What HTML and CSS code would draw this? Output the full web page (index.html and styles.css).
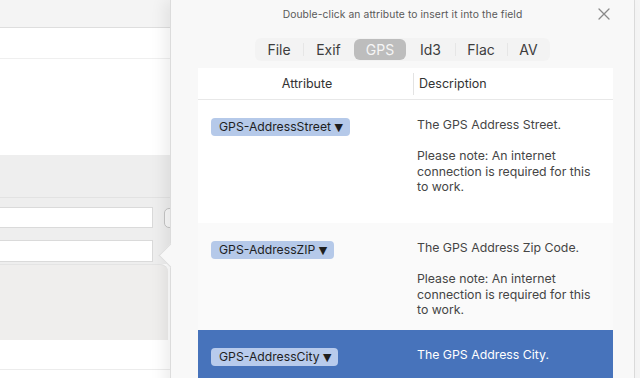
FILE: index.html
```html
<!DOCTYPE html>
<html>
<head>
<meta charset="utf-8">
<link rel="stylesheet" href="styles.css">
</head>
<body>
<div class="app">
  <div class="main">
    <div class="toolbar"></div>
    <div class="pathbar"></div>
    <div class="blank"></div>
    <div class="band"></div>
    <div class="fields">
      <div class="field-row"><div class="input"></div><div class="btn"></div></div>
      <div class="field-row second"><div class="input"></div></div>
    </div>
    <div class="sheet"></div>
    <div class="footer"></div>
  </div>
  <div class="side"></div>

  <div class="popover">
    <div class="pop-head">
      <span></span>
      <span class="hint">Double-click an attribute to insert it into the field</span>
      <span class="close" aria-label="Close">
        <svg width="12" height="12" viewBox="0 0 12 12"><path d="M1 1 L11 11 M11 1 L1 11" stroke="#8a8a8a" stroke-width="1.3" fill="none" stroke-linecap="round"/></svg>
      </span>
    </div>
    <div class="seg">
      <span class="tab">File</span>
      <span class="tab sep">Exif</span>
      <span class="tab active">GPS</span>
      <span class="tab">Id3</span>
      <span class="tab sep">Flac</span>
      <span class="tab sep">AV</span>
    </div>
    <div class="table">
      <div class="thead">
        <div class="th th-attr">Attribute</div>
        <div class="th th-desc">Description</div>
      </div>
      <div class="tr r1">
        <div class="td-attr"><span class="token">GPS-AddressStreet <span class="caret">▼</span></span></div>
        <div class="td-desc">The GPS Address Street.<br><br>Please note: An internet connection is required for this to work.</div>
      </div>
      <div class="tr r2">
        <div class="td-attr"><span class="token">GPS-AddressZIP <span class="caret">▼</span></span></div>
        <div class="td-desc">The GPS Address Zip Code.<br><br>Please note: An internet connection is required for this to work.</div>
      </div>
      <div class="tr r3 selected">
        <div class="td-attr"><span class="token">GPS-AddressCity <span class="caret">▼</span></span></div>
        <div class="td-desc">The GPS Address City.</div>
      </div>
    </div>
  </div>
</div>
</body>
</html>
```

FILE: styles.css
```css
* { box-sizing: border-box; }
html, body { margin: 0; padding: 0; }
body {
  width: 640px;
  height: 378px;
  overflow: hidden;
  font-family: Inter, "Liberation Sans", Arial, sans-serif;
  background: #ffffff;
}
.app {
  position: relative;
  display: flex;
  width: 640px;
  height: 378px;
  overflow: hidden;
}
.main {
  flex: 1;
  display: flex;
  flex-direction: column;
  background: #ffffff;
}
.toolbar {
  height: 28px;
  flex: none;
  background: #f4f4f4;
  border-bottom: 1px solid #dedede;
}
.pathbar {
  height: 31px;
  flex: none;
  background: #ffffff;
  border-bottom: 1px solid #efefef;
}
.blank {
  height: 96px;
  flex: none;
  background: #ffffff;
}
.band {
  height: 43px;
  flex: none;
  background: #eeeeee;
  border-bottom: 1px solid #e2e2e2;
}
.fields {
  flex: none;
  background: #eeeeee;
  padding: 9px 0 2px;
  display: flex;
  flex-direction: column;
  gap: 12px;
}
.field-row {
  display: flex;
  align-items: center;
  gap: 11px;
}
.input {
  width: 153px;
  height: 21px;
  background: #ffffff;
  border: 1px solid #dadada;
  border-left: none;
}
.field-row.second .input { height: 22px; }
.btn {
  width: 20px;
  height: 20px;
  border: 1px solid #c4c4c4;
  border-radius: 5px;
  background: #f8f8f8;
}
.sheet {
  flex: none;
  height: 76px;
  background: #efeeed;
  border-top-right-radius: 8px;
  margin-right: 466px;
  border-top: 1px solid #e4e4e4;
}
.footer {
  flex: none;
  height: 30px;
  background: #ffffff;
  border-bottom: 1px solid #ececec;
}
.side {
  width: 6px;
  flex: none;
  background: #f5f5f5;
  border-left: 1px solid #dddddd;
}

/* popover */
.popover {
  position: absolute;
  left: 170px;
  top: 0;
  width: 464px;
  height: 400px;
  background: #f8f8f8;
  border-left: 1px solid #dcdcdc;
  box-shadow: -6px 0 14px rgba(0, 0, 0, 0.07);
}
.popover::before {
  content: "";
  position: absolute;
  left: -9px;
  top: 247px;
  width: 16px;
  height: 16px;
  background: #f8f8f8;
  border-left: 1px solid #dcdcdc;
  border-bottom: 1px solid #dcdcdc;
  transform: rotate(45deg);
}
.pop-head {
  height: 28px;
  display: grid;
  grid-template-columns: 1fr auto 1fr;
  align-items: center;
}
.hint {
  font-size: 10.3px;
  color: #5a5a5a;
  letter-spacing: 0.1px;
}
.close {
  justify-self: end;
  margin-right: 24px;
  width: 12px;
  height: 12px;
  display: flex;
}
.seg {
  margin: 10px auto 0;
  width: 295px;
  height: 23px;
  background: #f3f3f3;
  border-radius: 6px;
  display: grid;
  grid-template-columns: 48px 51px 52px 49px 52px 43px;
  align-items: center;
}
.tab {
  position: relative;
  height: 21px;
  display: flex;
  align-items: center;
  justify-content: center;
  font-size: 14px;
  color: #3d3d3d;
}
.tab.sep::before {
  content: "";
  position: absolute;
  left: 0;
  top: 4px;
  bottom: 4px;
  width: 1px;
  background: #e6e6e6;
}
.tab.active {
  background: #bdbdbd;
  color: #f6f6f6;
  border-radius: 6px;
}
.table {
  margin: 7px 0 0 27px;
  width: 415px;
  background: #ffffff;
}
.thead {
  display: grid;
  grid-template-columns: 215px 200px;
  height: 32px;
  align-items: center;
  border-bottom: 1px solid #e8e8e8;
}
.th {
  font-size: 12.5px;
  color: #333333;
}
.th-attr { text-align: center; padding-left: 3px; }
.th-desc {
  padding-left: 5px;
  border-left: 1px solid #e3e3e3;
  height: 22px;
  display: flex;
  align-items: center;
}
.tr {
  display: grid;
  grid-template-columns: 215px 200px;
  align-items: start;
}
.r1 { height: 123px; background: #ffffff; }
.r2 { height: 107px; background: #fafafa; }
.r3 { height: 60px; }
.selected { background: #4773bb; }
.td-attr {
  padding: 18px 0 0 13px;
  line-height: 18px;
}
.token {
  display: inline-block;
  vertical-align: top;
  height: 18px;
  line-height: 18px;
  padding: 0 7px 0 8px;
  border-radius: 4px;
  background: #b5c9e9;
  color: #1e1e1e;
  font-size: 12.2px;
}
.caret {
  font-family: "DejaVu Sans", sans-serif;
  font-size: 11px;
}
.selected .token { background: #b8cbec; }
.td-desc {
  padding: 17px 8px 0 4px;
  font-size: 12.3px;
  line-height: 15.5px;
  color: #454545;
}
.selected .td-desc { color: #ffffff; }
```
